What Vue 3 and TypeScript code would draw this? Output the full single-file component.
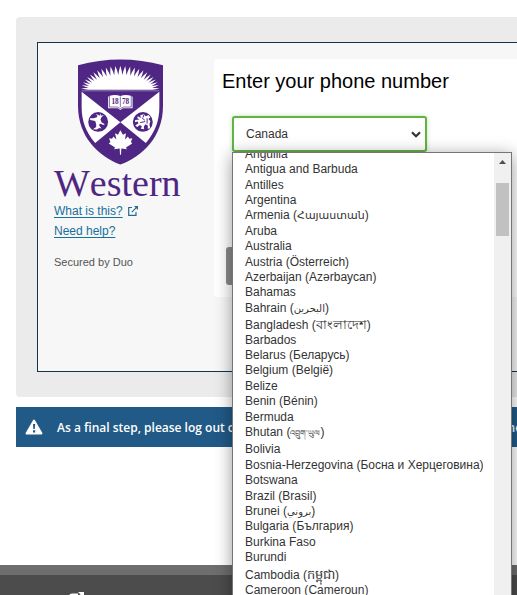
<script setup lang="ts">
import { ref } from 'vue'

interface Country {
  name: string
  native?: string
  script?: 'armenian' | 'arabic' | 'indic' | 'tibetan' | 'latin'
  tall?: boolean
}

const countries: Country[] = [
  { name: 'Anguilla' },
  { name: 'Antigua and Barbuda' },
  { name: 'Antilles' },
  { name: 'Argentina' },
  { name: 'Armenia', native: 'Հայաստան', script: 'armenian' },
  { name: 'Aruba' },
  { name: 'Australia' },
  { name: 'Austria', native: 'Österreich' },
  { name: 'Azerbaijan', native: 'Azərbaycan' },
  { name: 'Bahamas' },
  { name: 'Bahrain', native: 'البحرين', script: 'arabic' },
  { name: 'Bangladesh', native: 'বাংলাদেশ', script: 'indic', tall: true },
  { name: 'Barbados' },
  { name: 'Belarus', native: 'Беларусь' },
  { name: 'Belgium', native: 'België' },
  { name: 'Belize' },
  { name: 'Benin', native: 'Bénin' },
  { name: 'Bermuda' },
  { name: 'Bhutan', native: 'འབྲུག་ཡུལ', script: 'tibetan' },
  { name: 'Bolivia', tall: true },
  { name: 'Bosnia-Herzegovina', native: 'Босна и Херцеговина' },
  { name: 'Botswana' },
  { name: 'Brazil', native: 'Brasil' },
  { name: 'Brunei', native: 'بروني', script: 'arabic' },
  { name: 'Bulgaria', native: 'България' },
  { name: 'Burkina Faso' },
  { name: 'Burundi' },
  { name: 'Cambodia', native: 'កម្ពុជា', script: 'indic', tall: true },
  { name: 'Cameroon', native: 'Cameroun' },
]

const selected = ref('Canada')

// Rising sun of the crest: curved rays fanned over a half ellipse.
function sunPath(): string {
  const rays = 25
  const at = (angle: number, rx: number, ry: number) =>
    `${(128 - Math.cos(angle) * rx).toFixed(1)} ${(92 - Math.sin(angle) * ry).toFixed(1)}`
  let d = 'M14 92'
  for (let i = 0; i < rays; i++) {
    const a0 = (Math.PI * i) / rays
    const a1 = (Math.PI * (i + 0.5)) / rays
    const a2 = (Math.PI * (i + 1)) / rays
    const lower = (Math.PI * (i + 0.15)) / rays
    const upper = (Math.PI * (i + 0.85)) / rays
    d += ` L${at(a0, 97, 45)} Q${at(lower, 107, 58)} ${at(a1, 119, 73)} Q${at(upper, 107, 58)} ${at(a2, 97, 45)}`
  }
  return d + ' L242 92Z'
}
const sun = sunPath()
</script>

<template>
  <div class="page">
    <main class="content">
      <section class="panel">
        <div class="frame">
          <aside class="brand">
            <svg class="crest" viewBox="0 0 257 318" role="img" aria-label="Western crest">
              <path fill="#4f2683" d="M0 18Q128-18 257 18V140C257 235 195 292 128 318C62 292 0 235 0 140Z" />
              <path fill="#fff" :d="sun" />
              <path stroke="#fff" stroke-width="2" d="M11 95H246" opacity=".6" />
              <path fill="#fff" d="M11 98L128 190L52 253C24 221 11 186 11 145ZM246 98L128 190L205 253C233 221 246 186 246 145Z" />
              <circle cx="61" cy="189" r="30" fill="#4f2683" />
              <circle cx="196" cy="189" r="30" fill="#4f2683" />
              <path fill="#fff" d="M36 178L47 178L57 175L59 170L53 166L61 167L65 170L69 163L69 170L78 168L71 175L68 182L71 190L81 196L77 198L66 194L64 200L71 209L64 207L57 212L45 211L55 204L55 196L52 186L37 183Z" />
              <path fill="#fff" d="M188 169L199 166L205 172L213 168L219 175L213 180L219 187L216 195L218 208L211 210L211 200L204 196L199 203L200 211L190 210L193 202L187 198L179 204L173 200L183 193L180 188L172 190L173 183L186 182L179 177L181 172L190 177Z" />
              <path stroke="#4f2683" stroke-width="3" fill="none" d="M193 176L202 184M188 191L203 188M209 178V194M199 168L197 175" />
              <path fill="#fff" d="M96 110Q113 104 128 111Q143 104 160 110V112H165V148H136L128 153L120 148H91V112H96Z" />
              <path fill="none" stroke="#4f2683" stroke-width="2" d="M95 144H119L128 149L137 144H161M128 112V144M95 112V144M161 112V144" />
              <g fill="#4f2683" class="year">
                <text x="101" y="136">18</text>
                <text x="133" y="136">78</text>
              </g>
              <path fill="#fff" d="M128 214L136 228L145 223L142 242L151 233L155 240L164 238L160 250L164 254L145 266L148 272L131 269L130 288H127L126 269L109 272L112 266L93 254L98 250L94 238L103 240L107 233L116 242L112 223L121 228Z" />
            </svg>
            <div class="wordmark">Western</div>
            <nav class="links">
              <div class="link-row">
                <a href="#what">What is this?</a>
                <svg class="external" viewBox="0 0 12 12" aria-hidden="true">
                  <path fill="none" stroke="#256b91" stroke-width="1.2" d="M5 2.5H1.7V10.3H9V7M4.8 7.2L9.8 2.2" />
                  <path fill="#256b91" d="M7 1H11V5Z" />
                </svg>
              </div>
              <div class="link-row"><a href="#help">Need help?</a></div>
            </nav>
            <p class="secured">Secured by Duo</p>
          </aside>

          <form class="card" @submit.prevent>
            <h1><label for="country">Enter your phone number</label></h1>
            <div class="picker">
              <select id="country" v-model="selected">
                <option>Canada</option>
              </select>
              <svg class="chevron" viewBox="0 0 10 7" aria-hidden="true">
                <path fill="none" stroke="#333" stroke-width="2.2" d="M1 1.3L5 5.2L9 1.3" />
              </svg>
              <div class="popup">
                <ul class="options" role="listbox" aria-label="Country">
                  <li v-for="c in countries" :key="c.name" role="option" :class="{ tall: c.tall }">
                    {{ c.name }}<template v-if="c.native"> (<bdi :class="c.script ?? 'latin'">{{ c.native }}</bdi>)</template>
                  </li>
                </ul>
                <div class="scrollbar" aria-hidden="true">
                  <svg class="arrow" viewBox="0 0 7 4"><path fill="#505050" d="M0 4L3.5 0L7 4Z" /></svg>
                  <div class="thumb"></div>
                </div>
              </div>
            </div>
            <button type="submit" class="continue" aria-label="Continue"></button>
          </form>
        </div>
      </section>

      <section class="notice">
        <svg class="warning" viewBox="0 0 18 16" aria-hidden="true">
          <path fill="#fff" stroke="#fff" stroke-width="2" stroke-linejoin="round" d="M9 1.5L16.5 14.5H1.5Z" />
          <path fill="#215a87" d="M8 5H10.2L9.8 10H8.3ZM8 11.3H10.2V13.4H8Z" />
        </svg>
        <span>As a final step, please log out of your session and close all browser windows when done.</span>
      </section>
    </main>

    <footer class="footer">
      <svg class="footer-icon" viewBox="0 0 16 16" aria-hidden="true">
        <path fill="none" stroke="#fff" stroke-width="2" d="M9 2.5H3Q1 2.5 1 4.5V13Q1 15 3 15H11Q13 15 13 13V8M6 9L12 3" />
        <path fill="#fff" d="M9 0H15V6Z" />
      </svg>
    </footer>
  </div>
</template>

<style>
body {
  margin: 0;
  background: #fff;
}
</style>

<style scoped>
.page {
  display: flex;
  flex-direction: column;
  height: 100vh;
  overflow: hidden;
  font-family: "Liberation Sans", "DejaVu Sans", "Noto Sans", sans-serif;
  font-size: 12px;
  color: #333;
}
.content {
  padding: 17px 0 118px 16px;
}
.panel {
  padding: 25px 0 25px 21px;
  background: #ebebeb;
  border-radius: 4px 0 0 4px;
}
.frame {
  display: flex;
  box-sizing: border-box;
  min-height: 330px;
  align-items: flex-start;
  padding: 16px 0 16px 16px;
  background: #f7f7f7;
  border: 1px solid #14344b;
  border-right: 0;
}
.brand {
  flex: 0 0 160px;
}
.crest {
  display: block;
  width: 85px;
  height: 106px;
  margin-left: 24px;
}
.year {
  font: bold 22px "Liberation Serif", serif;
}
.wordmark {
  height: 36px;
  line-height: 36px;
  font-family: "Liberation Serif", serif;
  font-size: 38px;
  font-kerning: none;
  color: #4f2683;
}
.link-row {
  display: flex;
  align-items: center;
  gap: 4px;
  height: 20px;
}
.link-row a {
  color: #16709c;
  text-decoration: underline;
  text-underline-offset: 2px;
}
.external {
  width: 12px;
  height: 12px;
}
.secured {
  margin: 13px 0 0;
  line-height: 16px;
  font-size: 11px;
  color: #555;
}
.card {
  flex: 1;
  box-sizing: border-box;
  min-height: 238px;
  padding: 8px 12px 12px;
  background: #fff;
  border-radius: 4px 0 0 4px;
}
h1 {
  margin: 0 -4px 21px;
  font-size: 20px;
  line-height: 28px;
  font-weight: 400;
  color: #000;
}
.picker {
  position: relative;
  z-index: 1;
  width: 195px;
  margin-left: 6px;
}
select {
  appearance: none;
  display: block;
  box-sizing: border-box;
  width: 100%;
  height: 36px;
  padding: 0 12px;
  border: 2px solid #63b246;
  border-radius: 3px;
  outline: 0;
  background: #fff;
  box-shadow: 0 0 4px #63b24666;
  font: inherit;
  color: #333;
}
.chevron {
  position: absolute;
  right: 6px;
  top: 15px;
  width: 10px;
  height: 7px;
}
.popup {
  position: absolute;
  top: 36px;
  left: 0;
  display: flex;
  box-sizing: border-box;
  width: 280px;
  height: 480px;
  overflow: hidden;
  background: #fff;
  border: 1px solid #767676;
  box-shadow: 0 3px 16px #0006;
}
.options {
  flex: 1;
  margin: -6px 0 0;
  padding: 0 0 0 12px;
  list-style: none;
}
.options li {
  height: 15px;
  line-height: 15px;
  white-space: nowrap;
}
.options li:nth-child(5n),
.options li:nth-child(5n + 2) {
  height: 16px;
}
.options li:nth-child(12) {
  height: 15px;
}
.options .tall {
  padding-top: 2px;
}
.options bdi {
  line-height: 1;
}
.armenian {
  font-size: 11px;
}
.arabic {
  font-size: 10px;
}
.indic {
  font-size: 13px;
}
.tibetan {
  font-size: 8px;
}
.scrollbar {
  box-sizing: border-box;
  width: 17px;
  padding: 7px 2px 0;
  background: #f0f0f0;
}
.arrow {
  display: block;
  width: 7px;
  height: 4px;
  margin: 0 auto 19px;
}
.thumb {
  height: 53px;
  background: #c1c1c1;
}
.continue {
  display: block;
  width: 195px;
  height: 38px;
  margin-top: 95px;
  border: 0;
  border-radius: 3px;
  background: #8b8b8b;
}
.notice {
  display: flex;
  align-items: center;
  gap: 14px;
  height: 40px;
  margin-top: 10px;
  padding-left: 9px;
  overflow: hidden;
  background: #215a87;
  color: #fff;
  font: 600 12px "Open Sans", sans-serif;
  white-space: nowrap;
}
.warning {
  flex: none;
  width: 18px;
  height: 16px;
}
.footer {
  flex: 1 0 30px;
  padding: 17px 0 0 69px;
  border-top: 10px solid #6e6e6e;
  background: #4c4c4c;
}
.footer-icon {
  display: block;
  width: 16px;
  height: 16px;
}
</style>
